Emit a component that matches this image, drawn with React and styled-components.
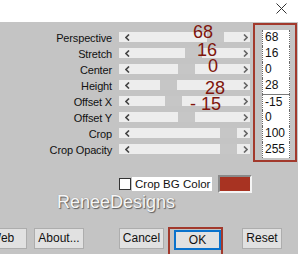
import React from "react";
import styled, { createGlobalStyle } from "styled-components";

const Global = createGlobalStyle`
  html, body { margin: 0; padding: 0; background: #c4c4c4; overflow: hidden; }
  body { font-family: "Liberation Sans", Arial, sans-serif; }
`;

const Window = styled.div`
  width: 298px;
  height: 254px;
  overflow: hidden;
  display: flex;
  flex-direction: column;
  background: #c4c4c4;
`;

const TitleBar = styled.div`
  height: 22px;
  flex: none;
  background: #ffffff;
  display: flex;
  justify-content: flex-end;
  align-items: flex-start;
  padding: 3px 11px 0 0;
  box-sizing: border-box;
`;

const Main = styled.div`
  position: relative;
  height: 140px;
  flex: none;
  display: flex;
  align-items: flex-start;
`;

const Rows = styled.div`
  display: flex;
  flex-direction: column;
  padding-top: 8px;
`;

const Row = styled.div`
  display: grid;
  grid-template-columns: 112px 131px;
  column-gap: 7px;
  height: 16px;
  align-items: start;
`;

const Label = styled.div`
  text-align: right;
  font-size: 11px;
  line-height: 14px;
  color: #111;
  white-space: nowrap;
  padding-top: 1px;
  letter-spacing: -0.15px;
`;

const Track = styled.div`
  position: relative;
  margin-top: 2px;
  height: 10px;
  background: #ededed;
  display: flex;
  align-items: center;
  justify-content: space-between;
  padding: 0 2px 0 6px;
`;

const Thumb = styled.div`
  position: absolute;
  top: 0;
  width: 17px;
  height: 10px;
  background: #c6c6c6;
`;

const ArrowSvg = styled.svg`
  position: relative;
  z-index: 1;
  display: block;
`;

const ValueBox = styled.div`
  margin: 1px 0 0 3px;
  border: 2px solid #a2392c;
  padding: 5px 5px 2px 7px;
  display: flex;
  flex-direction: column;
`;

const ValueInput = styled.div`
  width: 28px;
  height: 16px;
  box-sizing: border-box;
  background: #ffffff;
  border-left: 1px dotted #6a6a6a;
  border-right: 1px dotted #6a6a6a;
  border-top: ${(p) => (p.$sep ? "1px solid #7a7a7a" : "none")};
  font-size: 12px;
  line-height: 15px;
  padding-left: 2px;
  color: #111;
`;

const Note = styled.div`
  position: absolute;
  font-family: "Liberation Sans", Arial, sans-serif;
  font-size: 19px;
  line-height: 18px;
  color: #7f150c;
  white-space: pre;
  transform: scaleX(0.95);
  transform-origin: left top;
`;

const OptionsRow = styled.div`
  margin-top: 13px;
  height: 18px;
  display: flex;
  align-items: center;
  padding-left: 119px;
`;

const Check = styled.div`
  width: 12px;
  height: 12px;
  box-sizing: border-box;
  background: #fff;
  border: 1px solid #333;
`;

const CheckLabel = styled.div`
  margin-left: 1px;
  width: 80px;
  height: 14px;
  box-sizing: border-box;
  background: #fff;
  padding-left: 3px;
  font-size: 11.5px;
  line-height: 14px;
  color: #111;
  white-space: nowrap;
`;

const Swatch = styled.div`
  margin-left: 6px;
  width: 34px;
  height: 18px;
  box-sizing: border-box;
  background: #a83322;
  border: 2px solid;
  border-color: #8a8a8a #f4f4f4 #f4f4f4 #8a8a8a;
`;

const Brand = styled.div`
  padding-left: 57px;
  height: 18px;
  font-size: 18px;
  line-height: 18px;
  color: #f6f6f6;
  text-shadow: 1px 1px 1px #5e5e5e, 0 0 1px #8a8a8a;
`;

const ButtonRow = styled.div`
  margin-top: 17px;
  display: flex;
  align-items: flex-start;
`;

const Button = styled.div`
  width: ${(p) => p.$w}px;
  height: 21px;
  margin-left: ${(p) => p.$ml}px;
  box-sizing: border-box;
  flex: none;
  background: #e1e1e1;
  border: 1px solid #adadad;
  font-size: 12px;
  line-height: 19px;
  text-align: center;
  color: #111;
`;

const OkFrame = styled.div`
  margin: -1px 0 0 4px;
  height: 40px;
  border: 2px solid #a2392c;
  padding: 1px 0 0 4px;
  flex: none;
`;

const OkButton = styled(Button)`
  height: 20px;
  border: 2px solid #0a72cc;
  line-height: 16px;
`;

const Close = () => (
  <svg width="11" height="11" viewBox="0 0 11 11">
    <path d="M0.5 0.5 L10.5 10.5 M10.5 0.5 L0.5 10.5" stroke="#333" strokeWidth="1" fill="none" />
  </svg>
);

const LeftArrow = () => (
  <ArrowSvg width="5" height="7" viewBox="0 0 5 7">
    <path d="M4 0.5 L1 3.5 L4 6.5" stroke="#444" strokeWidth="1.6" fill="none" />
  </ArrowSvg>
);

const RightArrow = () => (
  <ArrowSvg width="5" height="7" viewBox="0 0 5 7">
    <path d="M1 0.5 L4 3.5 L1 6.5" stroke="#666" strokeWidth="1.6" fill="none" />
  </ArrowSvg>
);

const params = [
  { label: "Perspective", value: "68", pos: 88 },
  { label: "Stretch", value: "16", pos: 66 },
  { label: "Center", value: "0", pos: 59 },
  { label: "Height", value: "28", pos: 41 },
  { label: "Offset X", value: "-15", pos: 46, sep: true },
  { label: "Offset Y", value: "0", pos: 59 },
  { label: "Crop", value: "100", pos: 101 },
  { label: "Crop Opacity", value: "255", pos: 101 },
];

const notes = [
  { text: "68", x: 193, y: 1 },
  { text: "16", x: 197, y: 19 },
  { text: "0", x: 208, y: 35 },
  { text: "28", x: 205, y: 57 },
  { text: "- 15", x: 190, y: 73 },
];

export default function App() {
  return (
    <>
      <Global />
      <Window>
        <TitleBar>
          <Close />
        </TitleBar>
        <Main>
          <Rows>
            {params.map((p) => (
              <Row key={p.label}>
                <Label>{p.label}</Label>
                <Track>
                  <Thumb style={{ left: p.pos }} />
                  <LeftArrow />
                  <RightArrow />
                </Track>
              </Row>
            ))}
          </Rows>
          <ValueBox>
            {params.map((p) => (
              <ValueInput key={p.label} $sep={p.sep}>
                {p.value}
              </ValueInput>
            ))}
          </ValueBox>
          {notes.map((n) => (
            <Note key={n.text} style={{ left: n.x, top: n.y }}>
              {n.text}
            </Note>
          ))}
        </Main>
        <OptionsRow>
          <Check />
          <CheckLabel>Crop BG Color</CheckLabel>
          <Swatch />
        </OptionsRow>
        <Brand>ReneeDesigns</Brand>
        <ButtonRow>
          <Button $w={50} $ml={-23}>Web</Button>
          <Button $w={50} $ml={7}>About...</Button>
          <Button $w={45} $ml={35}>Cancel</Button>
          <OkFrame>
            <OkButton $w={47} $ml={0}>OK</OkButton>
          </OkFrame>
          <Button $w={40} $ml={19}>Reset</Button>
        </ButtonRow>
      </Window>
    </>
  );
}
